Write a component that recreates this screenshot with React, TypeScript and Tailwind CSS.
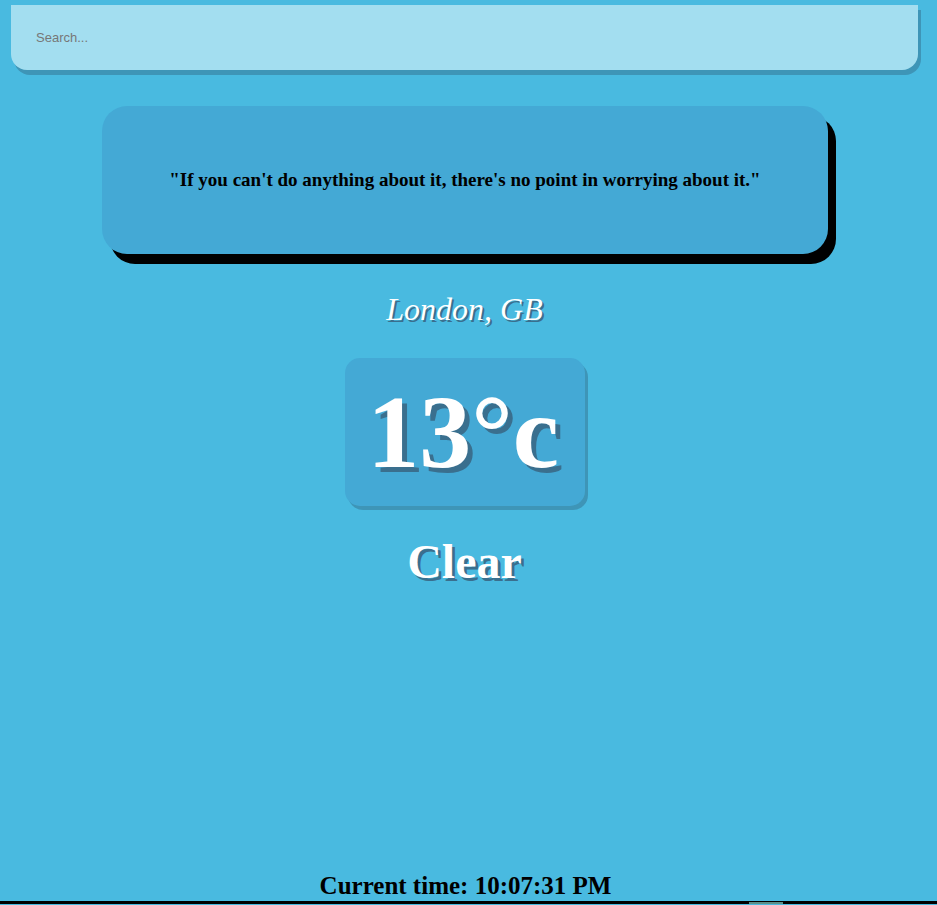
export default function App() {
  return (
    <div className="min-h-[905px] bg-[#49bae0] flex flex-col font-['Liberation_Serif',serif]">
      {/* Search bar */}
      <div className="pt-[5px] pl-[11px]">
        <input
          type="text"
          autoFocus
          placeholder="Search..."
          className="w-[907px] h-[65px] bg-[#a3def0] rounded-b-[16px] pl-[25px] text-[13px] font-['Liberation_Sans',sans-serif] text-gray-700 caret-black placeholder:text-[#777] outline-none shadow-[3px_5px_0_#3e95b7]"
        />
      </div>

      {/* Quote card */}
      <div className="mt-[36px] ml-[102px] w-[726px] h-[148px] rounded-[25px] bg-[#44a9d5] shadow-[8px_10px_0_#000] flex items-center justify-center">
        <p className="text-[19px] font-bold text-black">
          "If you can't do anything about it, there's no point in worrying about it."
        </p>
      </div>

      {/* Weather */}
      <div className="flex flex-col items-center">
        <h2 className="mt-[35px] pr-[8px] text-[32px] leading-[40px] italic text-white [text-shadow:2px_2px_0_#3a6f8e]">
          London, GB
        </h2>
        <div className="mt-[29px] ml-[-7px] w-[240px] h-[148px] rounded-[15px] bg-[#44a9d5] shadow-[3px_4px_0_#3e95b7] flex items-center justify-center">
          <span className="pr-[4px] text-[104px] leading-none font-bold text-white [text-shadow:5px_5px_0_#3a6f8e]">
            13°c
          </span>
        </div>
        <h1 className="mt-[28px] pr-[8px] text-[48px] leading-[56px] font-bold text-white [text-shadow:3px_3px_0_#3a6f8e]">
          Clear
        </h1>
      </div>

      {/* Footer */}
      <div className="mt-auto flex flex-col">
        <p className="pr-[6px] text-center text-[25px] leading-[29px] font-bold text-black">
          Current time: 10:07:31 PM
        </p>
        <div className="mt-[1px] h-[3px] bg-black flex">
          <div className="ml-[749px] w-[34px] h-[2px] mt-[1px] bg-[#5b8f8a]" />
        </div>
        <div className="h-[1px]" />
      </div>
    </div>
  );
}
